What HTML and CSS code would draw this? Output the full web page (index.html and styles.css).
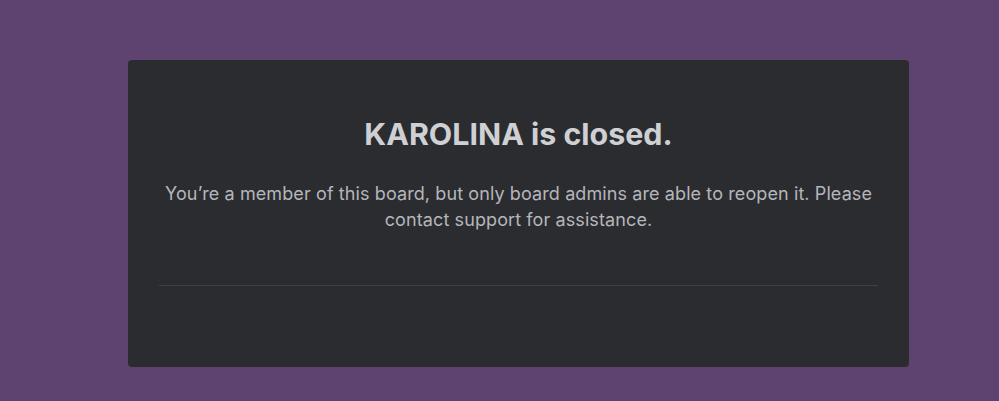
FILE: index.html
```html
<!DOCTYPE html>
<html>
<head>
<meta charset="utf-8">
<link rel="stylesheet" href="styles.css">
</head>
<body>
<main class="page">
  <section class="card">
    <h1 class="title">KAROLINA is closed.</h1>
    <p class="message">You’re a member of this board, but only board admins are able to reopen it. Please contact support for assistance.</p>
    <hr class="divider">
  </section>
</main>
</body>
</html>
```

FILE: styles.css
```css
html, body {
  margin: 0;
  padding: 0;
  background: #5e4370;
  height: 100%;
}
.page {
  padding: 60px 0 0 128px;
}
.card {
  width: 781px;
  height: 307px;
  box-sizing: border-box;
  background: #2b2c30;
  border-radius: 4px;
  padding: 56px 31px 0;
  font-family: Inter, "Noto Sans", sans-serif;
  text-align: center;
}
.title {
  margin: 0;
  font-size: 30.4px;
  line-height: 36px;
  font-weight: 700;
  color: #cfd0d4;
}
.message {
  margin: 29px 0 0;
  font-size: 18px;
  line-height: 26px;
  letter-spacing: 0.1px;
  color: #b5b6bb;
  padding: 0 4px;
}
.divider {
  margin: 52px 0 0;
  border: 0;
  height: 1px;
  background: #3e4045;
}
```
